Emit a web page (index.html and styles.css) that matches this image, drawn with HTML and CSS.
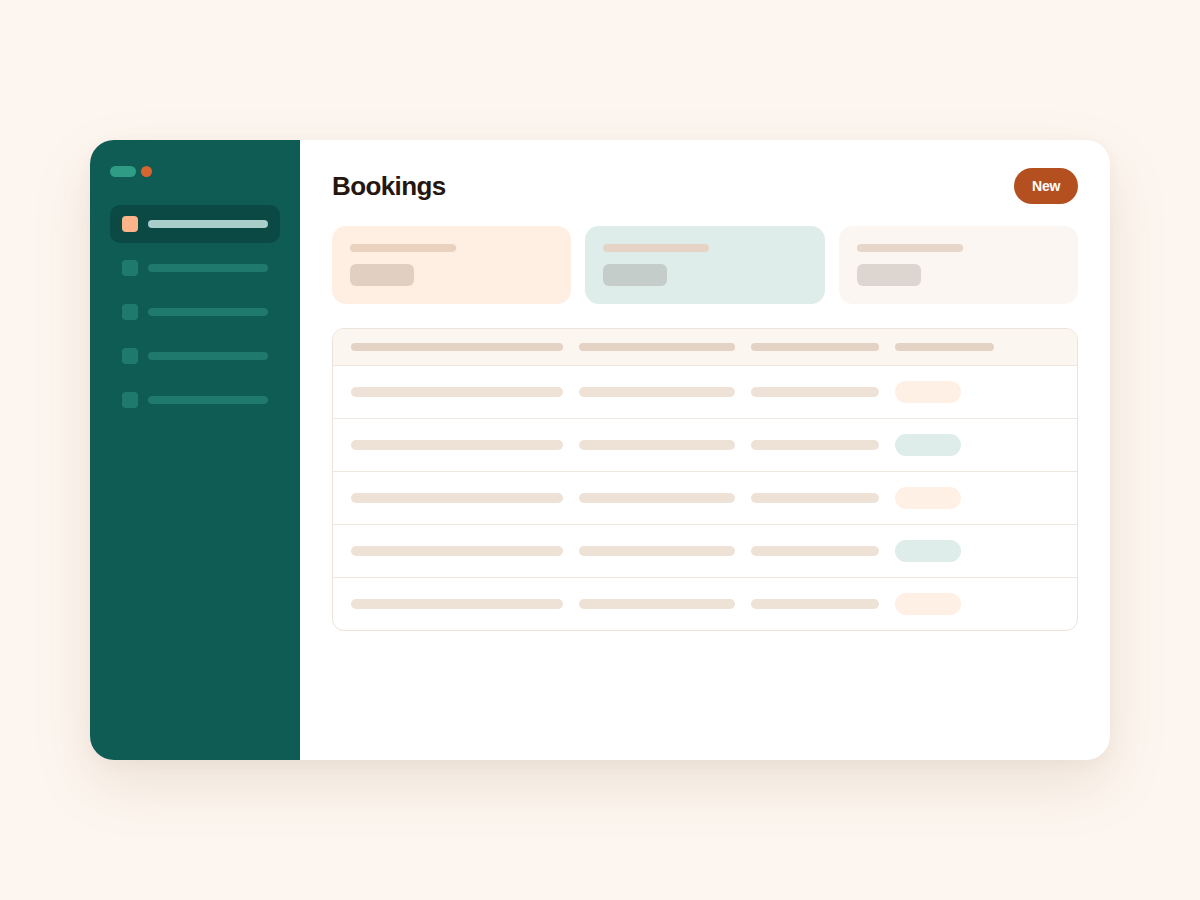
FILE: index.html
```html
<!DOCTYPE html>
<html lang="en">
<head>
<meta charset="utf-8">
<title>Bookings</title>
<link rel="stylesheet" href="styles.css">
</head>
<body>
<div class="app">
  <aside class="sidebar">
    <div class="logo"><span class="logo-pill"></span><span class="logo-dot"></span></div>
    <nav class="nav">
      <div class="nav-item active"><span class="nav-icon"></span><span class="nav-bar"></span></div>
      <div class="nav-item"><span class="nav-icon"></span><span class="nav-bar"></span></div>
      <div class="nav-item"><span class="nav-icon"></span><span class="nav-bar"></span></div>
      <div class="nav-item"><span class="nav-icon"></span><span class="nav-bar"></span></div>
      <div class="nav-item"><span class="nav-icon"></span><span class="nav-bar"></span></div>
    </nav>
  </aside>
  <main class="main">
    <header class="header">
      <h1 class="title">Bookings</h1>
      <button class="btn-new">New</button>
    </header>
    <section class="stats">
      <div class="stat stat-peach"><span class="stat-label"></span><span class="stat-value"></span></div>
      <div class="stat stat-teal"><span class="stat-label"></span><span class="stat-value"></span></div>
      <div class="stat stat-cream"><span class="stat-label"></span><span class="stat-value"></span></div>
    </section>
    <section class="table">
      <div class="row head">
        <span class="cell c1"></span><span class="cell c2"></span><span class="cell c3"></span><span class="cell c4"></span>
      </div>
      <div class="row">
        <span class="cell c1"></span><span class="cell c2"></span><span class="cell c3"></span><span class="badge peach"></span>
      </div>
      <div class="row">
        <span class="cell c1"></span><span class="cell c2"></span><span class="cell c3"></span><span class="badge teal"></span>
      </div>
      <div class="row">
        <span class="cell c1"></span><span class="cell c2"></span><span class="cell c3"></span><span class="badge peach"></span>
      </div>
      <div class="row">
        <span class="cell c1"></span><span class="cell c2"></span><span class="cell c3"></span><span class="badge teal"></span>
      </div>
      <div class="row">
        <span class="cell c1"></span><span class="cell c2"></span><span class="cell c3"></span><span class="badge peach"></span>
      </div>
    </section>
  </main>
</div>
</body>
</html>
```

FILE: styles.css
```css
* { box-sizing: border-box; }
html, body { margin: 0; padding: 0; }
body {
  background: #fdf6f0;
  font-family: "Liberation Sans", Arial, sans-serif;
  min-height: 100vh;
  display: flex;
  align-items: center;
  justify-content: center;
}
.app {
  width: 1020px;
  height: 620px;
  display: flex;
  border-radius: 24px;
  overflow: hidden;
  background: #ffffff;
  box-shadow: 0 24px 60px rgba(130, 90, 50, 0.13), 0 4px 14px rgba(130, 90, 50, 0.05);
}
.sidebar {
  width: 210px;
  flex: none;
  background: #0f5c55;
  padding: 26px 20px;
  display: flex;
  flex-direction: column;
}
.logo {
  display: flex;
  align-items: center;
  gap: 5px;
  height: 11px;
}
.logo-pill {
  width: 26px;
  height: 11px;
  border-radius: 6px;
  background: #2f9d86;
}
.logo-dot {
  width: 11px;
  height: 11px;
  border-radius: 50%;
  background: #d8652f;
}
.nav {
  margin-top: 28px;
  display: flex;
  flex-direction: column;
  gap: 6px;
}
.nav-item {
  height: 38px;
  border-radius: 10px;
  padding: 0 12px;
  display: flex;
  align-items: center;
  gap: 10px;
}
.nav-item.active { background: #0b4a44; }
.nav-icon {
  width: 16px;
  height: 16px;
  border-radius: 4px;
  background: #1f7a6d;
  flex: none;
}
.nav-bar {
  flex: 1;
  height: 8px;
  border-radius: 4px;
  background: #1f7a6d;
}
.nav-item.active .nav-icon { background: #fbb48a; }
.nav-item.active .nav-bar { background: #a9cdc8; }

.main {
  flex: 1;
  padding: 28px 32px;
  display: flex;
  flex-direction: column;
}
.header {
  display: flex;
  align-items: center;
  justify-content: space-between;
  height: 36px;
}
.title {
  margin: 0;
  font-size: 26px;
  font-weight: 700;
  letter-spacing: -0.6px;
  color: #25170f;
  line-height: 1;
}
.btn-new {
  height: 36px;
  padding: 0 18px;
  border: none;
  border-radius: 18px;
  background: #b4501f;
  color: #ffffff;
  font-family: "Liberation Sans", Arial, sans-serif;
  font-weight: 700;
  font-size: 14px;
  letter-spacing: -0.3px;
}
.stats {
  margin-top: 22px;
  display: grid;
  grid-template-columns: 1fr 1fr 1fr;
  gap: 14px;
}
.stat {
  height: 78px;
  border-radius: 14px;
  padding: 18px;
  display: flex;
  flex-direction: column;
  gap: 12px;
}
.stat-label {
  width: 106px;
  height: 8px;
  border-radius: 4px;
}
.stat-value {
  width: 64px;
  height: 22px;
  border-radius: 6px;
}
.stat-peach { background: #ffeee2; }
.stat-peach .stat-label { background: #ead2c1; }
.stat-peach .stat-value { background: #e1cfc2; }
.stat-teal { background: #deedea; }
.stat-teal .stat-label { background: #e5d3c5; }
.stat-teal .stat-value { background: #c5cdca; }
.stat-cream { background: #fbf6f1; }
.stat-cream .stat-label { background: #e8d6c9; }
.stat-cream .stat-value { background: #ddd5cf; }

.table {
  margin-top: 24px;
  border: 1px solid #ebe3db;
  border-radius: 12px;
  overflow: hidden;
}
.row {
  height: 53px;
  border-top: 1px solid #efe8e0;
  display: grid;
  grid-template-columns: 212px 156px 128px 1fr;
  column-gap: 16px;
  align-items: center;
  padding: 0 18px;
}
.row.head {
  height: 37px;
  border-top: none;
  border-bottom: 1px solid #efe6de;
  background: #fcf6f1;
}
.row.head + .row { border-top: none; height: 52px; }
.cell {
  height: 10px;
  border-radius: 5px;
  background: #eee2d7;
}
.head .cell {
  height: 8px;
  border-radius: 4px;
  background: #e4d3c5;
}
.head .c4 { width: 99px; }
.badge {
  width: 66px;
  height: 22px;
  border-radius: 11px;
}
.badge.peach { background: #fff0e6; }
.badge.teal { background: #deedea; }
```
